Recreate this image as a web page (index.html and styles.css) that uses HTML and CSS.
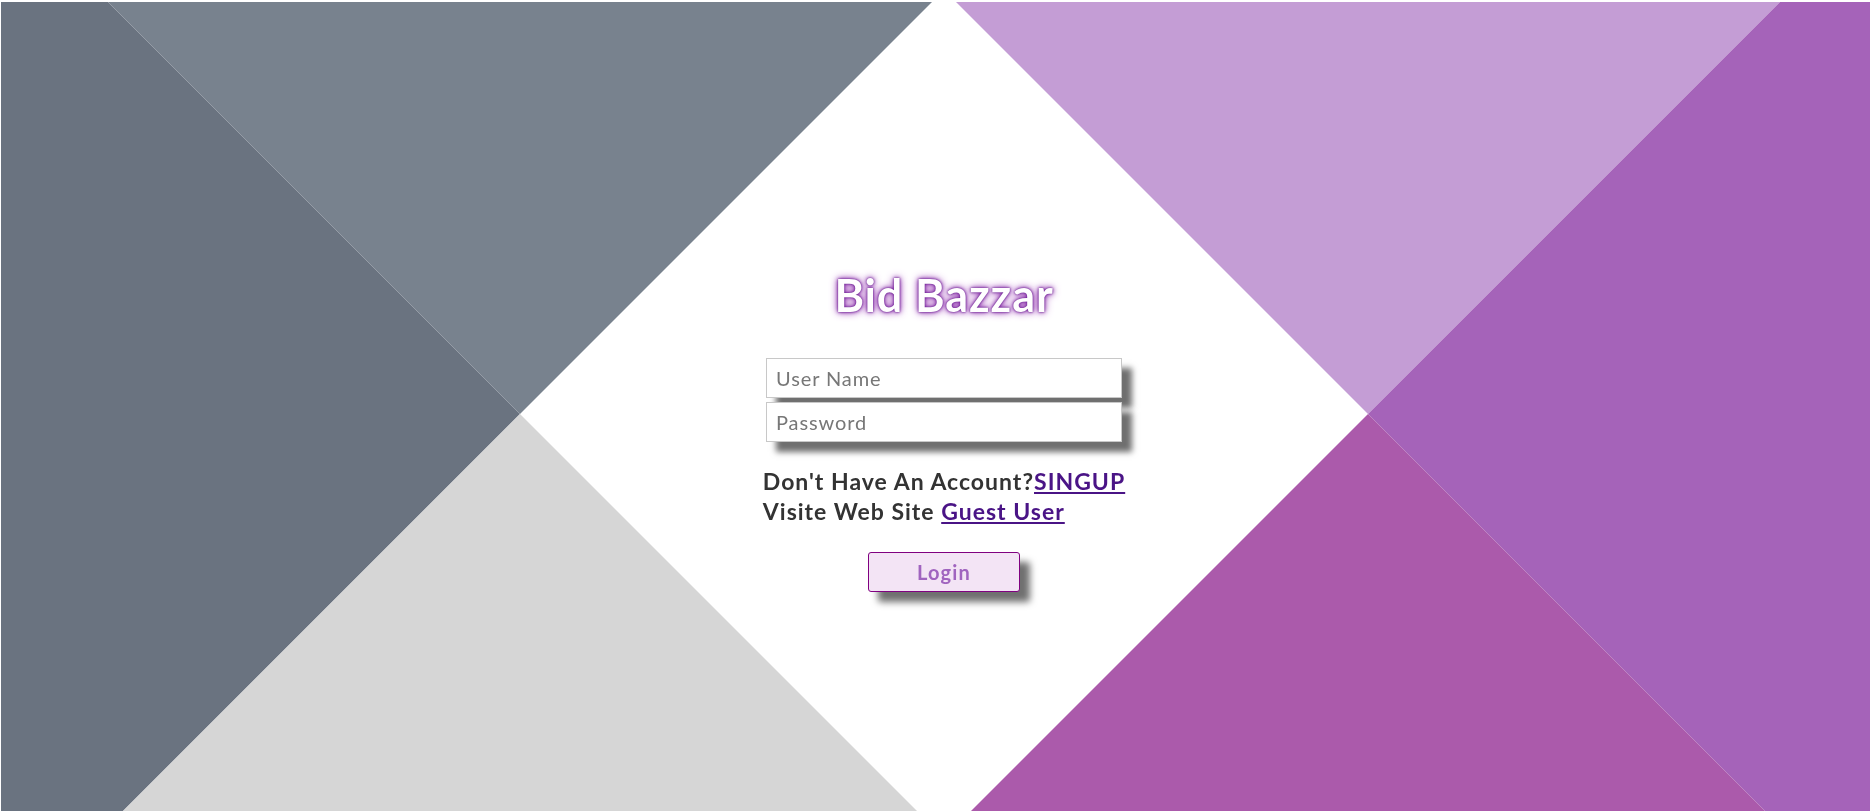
FILE: index.html
```html
<!DOCTYPE html>
<html lang="en">
<head>
<meta charset="utf-8">
<title>Bid Bazzar</title>
<link rel="stylesheet" href="styles.css">
</head>
<body>
<div class="backdrop" aria-hidden="true">
  <svg class="backdrop-art" viewBox="0 0 1870 811" width="1870" height="811" preserveAspectRatio="none">
    <polygon class="c-slate" points="1,2 108,2 520,414 123,811 1,811"/>
    <polygon class="c-slate-light" points="108,2 932,2 520,414"/>
    <polygon class="c-grey" points="520,414 917,811 123,811"/>
    <polygon class="c-lilac" points="956,2 1780,2 1368,414"/>
    <polygon class="c-purple" points="1780,2 1870,2 1870,811 1765,811 1368,414"/>
    <polygon class="c-magenta" points="1368,414 1765,811 971,811"/>
  </svg>
</div>
<main class="page">
  <section class="login">
    <h1 class="title">Bid Bazzar</h1>
    <form class="form">
      <div class="fields">
        <input class="field" type="text" placeholder="User Name">
        <input class="field" type="password" placeholder="Password">
      </div>
      <div class="links">
        <p class="line">Don't Have An Account?<a class="link" href="#">SINGUP</a></p>
        <p class="line">Visite Web Site <a class="link" href="#">Guest User</a></p>
      </div>
      <button class="btn" type="button">Login</button>
    </form>
  </section>
</main>
</body>
</html>
```

FILE: styles.css
```css
html, body {
  margin: 0;
  padding: 0;
  height: 100%;
  background: #ffffff;
  overflow: hidden;
}

body {
  font-family: Lato, "Open Sans", sans-serif;
}

.backdrop {
  position: fixed;
  left: 0;
  top: 0;
  width: 1870px;
  height: 811px;
  z-index: 0;
}

.backdrop-art {
  display: block;
}

.c-slate { fill: #6a7380; }
.c-slate-light { fill: #78828e; }
.c-grey { fill: #d6d6d6; }
.c-lilac { fill: #c49dd5; }
.c-purple { fill: #a563b9; }
.c-magenta { fill: #ab5aab; }

.page {
  position: relative;
  z-index: 1;
  display: flex;
  justify-content: center;
  padding-left: 18px;
  padding-top: 269px;
}

.login {
  display: flex;
  flex-direction: column;
  align-items: center;
}

.title {
  margin: 0;
  font-size: 45px;
  line-height: 53px;
  font-weight: 700;
  letter-spacing: 0.9px;
  color: #ffffff;
  text-shadow: 0 0 2px #5e1786, 0 0 4px #7b1fa2, 0 0 8px #9c3bb5;
}

.form {
  display: flex;
  flex-direction: column;
  align-items: center;
  margin-top: 36px;
}

.fields {
  display: flex;
  flex-direction: column;
  gap: 4px;
}

.field {
  box-sizing: border-box;
  width: 356px;
  height: 40px;
  border: 1px solid #c8c8c8;
  padding: 0 9px;
  font-family: Lato, sans-serif;
  font-size: 20px;
  font-weight: 400;
  letter-spacing: 0.9px;
  color: #333;
  background: #fff;
  box-shadow: 10px 10px 6px #6f6f6f;
  outline: none;
}

.field::placeholder {
  color: #777777;
}

.links {
  margin-top: 24px;
  align-self: center;
}

.line {
  margin: 0;
  font-size: 23px;
  line-height: 30px;
  font-weight: 700;
  letter-spacing: 1px;
  color: #333333;
  white-space: nowrap;
}

.link {
  color: #4a1486;
  text-decoration: underline;
}

.btn {
  margin-top: 26px;
  box-sizing: border-box;
  width: 152px;
  height: 40px;
  border: 1px solid #800080;
  border-radius: 3px;
  background: #f3e4f5;
  color: #a064bf;
  font-family: Lato, sans-serif;
  font-size: 20px;
  font-weight: 700;
  letter-spacing: 1.2px;
  box-shadow: 10px 10px 7px #707070;
  cursor: pointer;
}
```
